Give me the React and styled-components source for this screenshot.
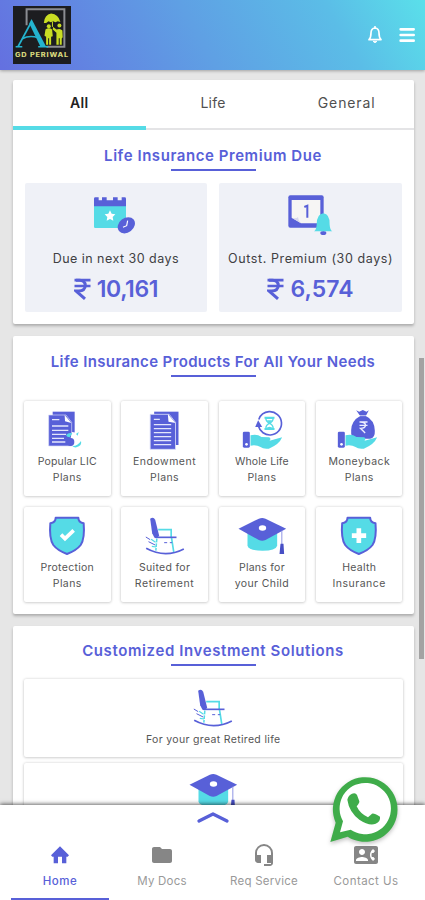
import React from "react";
import styled, { createGlobalStyle } from "styled-components";
import { MdFolder, MdHeadsetMic, MdContactPhone } from "react-icons/md";

const INDIGO = "#5860d8";
const CYAN = "#55dbe6";

const GlobalStyle = createGlobalStyle`
  * { box-sizing: border-box; }
  body {
    margin: 0;
    background: #e6e6e6;
    font-family: Inter, "Open Sans", sans-serif;
  }
`;

const Screen = styled.div`
  position: relative;
  display: flex;
  flex-direction: column;
  width: 425px;
  height: 900px;
  overflow: hidden;
  background: #e6e6e6;
`;

const Header = styled.header`
  flex: none;
  display: flex;
  align-items: center;
  height: 70px;
  padding: 0 10px 0 13px;
  background: linear-gradient(60deg, #6470e0 0%, #5fa0e4 47%, #5bbde7 78%, #5ae0ea 100%);
  box-shadow: 0 1px 3px rgba(0, 0, 0, 0.3);
  z-index: 1;
`;

const HeaderActions = styled.div`
  display: flex;
  align-items: center;
  gap: 16px;
  margin-left: auto;
`;

const Content = styled.main`
  flex: 1;
  min-height: 0;
  display: flex;
  flex-direction: column;
  gap: 12px;
  padding: 10px 11.5px 0 12.5px;
  overflow: hidden;
`;

const Card = styled.section`
  flex: none;
  height: ${(p) => p.$height}px;
  background: #fff;
  border-radius: 2px;
  box-shadow: 0 2px 3px rgba(0, 0, 0, 0.25);
`;

const Tabs = styled.nav`
  display: grid;
  grid-template-columns: repeat(3, 1fr);
  height: 50px;
  border-bottom: 2px solid #e4e4e6;
`;

const Tab = styled.div`
  height: 50px;
  padding-top: 12px;
  border-bottom: 4px solid ${(p) => (p.$active ? CYAN : "transparent")};
  color: ${(p) => (p.$active ? "#222" : "#505050")};
  font-size: 14px;
  font-weight: ${(p) => (p.$active ? 600 : 400)};
  letter-spacing: ${(p) => p.$track || 0}px;
  line-height: 21px;
  text-align: center;
`;

const Title = styled.h2`
  margin: 0;
  padding-top: ${(p) => p.$top}px;
  color: ${INDIGO};
  font-size: 15px;
  font-weight: 600;
  line-height: 21px;
  letter-spacing: ${(p) => p.$track || 0}px;
  text-align: center;
  white-space: nowrap;

  &::after {
    content: "";
    display: block;
    width: 85px;
    height: 2px;
    margin: 3px auto 0;
    background: ${INDIGO};
  }
`;

const DueRow = styled.div`
  display: grid;
  grid-template-columns: 1fr 1fr;
  gap: 12px;
  padding: 12px 11.5px 0 12px;
`;

const DueTile = styled.div`
  display: flex;
  flex-direction: column;
  align-items: center;
  height: 129px;
  padding-top: 10px;
  background: #eff1f7;
  border-radius: 2px;
`;

const DueLabel = styled.div`
  margin-top: 14px;
  color: #404043;
  font-size: 12.5px;
  line-height: 20px;
  letter-spacing: ${(p) => p.$track || 0}px;
  white-space: nowrap;
`;

const Amount = styled.div`
  display: flex;
  align-items: center;
  gap: 6px;
  margin-top: 5px;
  color: ${INDIGO};
  font-size: 23px;
  font-weight: 600;
  line-height: 30px;
  letter-spacing: ${(p) => p.$track || 0}px;
`;

const ProductGrid = styled.div`
  display: grid;
  grid-template-columns: repeat(4, 86.5px);
  justify-content: space-between;
  row-gap: 11px;
  padding: 24px 11px 0 11.5px;
`;

const Product = styled.div`
  display: flex;
  flex-direction: column;
  align-items: center;
  height: 95px;
  padding-top: 9px;
  background: #fff;
  border-radius: 2px;
  box-shadow: 0 0 3px rgba(0, 0, 0, 0.16), 0 1px 3px rgba(0, 0, 0, 0.12);
`;

const Caption = styled.div`
  margin-top: ${(p) => p.$gap || 0}px;
`;

const CaptionLine = styled.div`
  color: #555;
  font-size: 10.5px;
  line-height: 16px;
  letter-spacing: ${(p) => p.$track || 0}px;
  text-align: center;
  white-space: nowrap;
`;

const SolutionList = styled.div`
  display: flex;
  flex-direction: column;
  gap: 6px;
  padding: 13px 11px 0 11.5px;
`;

const Solution = styled(Product)`
  height: 78px;
`;

const ScrollThumb = styled.div`
  position: absolute;
  top: 358px;
  right: 1px;
  width: 5px;
  height: 301px;
  background: #a3a3a3;
`;

const BottomBar = styled.footer`
  flex: none;
  display: flex;
  flex-direction: column;
  align-items: center;
  height: 95px;
  padding: 6px 8px 0;
  background: #fff;
  box-shadow: 0 -1px 4px rgba(0, 0, 0, 0.6);
  z-index: 1;
`;

const NavRow = styled.nav`
  display: grid;
  grid-template-columns: repeat(4, 1fr);
  width: 100%;
  margin-top: auto;
  padding-left: 1px;
`;

const NavItem = styled.div`
  display: flex;
  flex-direction: column;
  align-items: center;
  height: 57px;
  margin: 0 2px;
  color: ${(p) => (p.$active ? INDIGO : "#868686")};
  border-bottom: 2px solid ${(p) => (p.$active ? INDIGO : "transparent")};
`;

const NavLabel = styled.span`
  margin-top: 5px;
  color: ${(p) => (p.$active ? INDIGO : "#999")};
  font-size: 11.5px;
  font-weight: ${(p) => (p.$active ? 500 : 400)};
  line-height: 18px;
  letter-spacing: ${(p) => p.$track || 0}px;
  white-space: nowrap;
`;

const ChatButton = styled.div`
  position: absolute;
  left: 327.5px;
  top: 774px;
  width: 70px;
  height: 70px;
  z-index: 2;
  filter: drop-shadow(0 2px 2px rgba(0, 0, 0, 0.25));
`;

const Drawing = styled.svg`
  display: block;
  flex: none;
`;

const Logo = () => (
  <Drawing width="58" height="58" viewBox="39 17 175 175">
    <rect x="39" y="17" width="175" height="175" fill="#1c1d20" />
    <path d="M80 75V27h114v113h-54" fill="none" stroke="#8b8d92" strokeWidth="6" />
    <path d="M54 140L94 66" fill="none" stroke="#24b4cf" strokeWidth="5" />
    <path d="M88 70l7-14 44 84h-17z" fill="#24b4cf" />
    <path d="M67 116q22-12 48-3" fill="none" stroke="#24b4cf" strokeWidth="5" />
    <path d="M47 140h20M115 140h30" stroke="#24b4cf" strokeWidth="4" />
    <path d="M132 68q2-24 22-28 22 2 28 25l-8-2-7 3-7-3-7 3-7-3-7 5z" fill="#c9dd23" />
    <path d="M158 64v16" stroke="#c9dd23" strokeWidth="3" />
    <circle cx="147" cy="78" r="6" fill="#c9dd23" />
    <path d="M137 88q10-8 20 0l2 20-5 2v24h-6v-20h-3v20h-6v-24l-5-3z" fill="#c9dd23" />
    <circle cx="179" cy="76" r="6" fill="#c9dd23" />
    <path d="M160 80l10 8q12-5 18 3l1 20-3 4v19h-6v-20h-3v20h-7V98l-11-10z" fill="#c9dd23" />
    <text x="45" y="170" textLength="163" lengthAdjust="spacingAndGlyphs" fill="#d6d77c" fontFamily="Inter, sans-serif" fontWeight="800" fontSize="18" letterSpacing="2">
      GD PERIWAL
    </text>
  </Drawing>
);

const BellIcon = () => (
  <Drawing width="16" height="18" viewBox="462 79 48 54" fill="none" stroke="#fff" strokeWidth="5" strokeLinejoin="round" strokeLinecap="round">
    <path d="M468 120q6-6 6-20 0-14 12-15 12 1 12 15 0 14 6 20z" />
    <path d="M486 81v4" />
    <path d="M481 126q5 6 10 0z" fill="#fff" strokeWidth="3" />
  </Drawing>
);

const MenuIcon = () => (
  <Drawing width="16" height="16" viewBox="557 83 48 48" fill="none" stroke="#fff" strokeWidth="8" strokeLinecap="round">
    <path d="M562 90h39M562 107h39M562 124h39" />
  </Drawing>
);

const CalendarClockIcon = () => (
  <Drawing width="46.67" height="42" viewBox="278 165 140 126">
    <path d="M281 203h96v67h-92q-4 0-4-4z" fill={CYAN} />
    <path d="M281 205v-23q0-4 4-4h10v9h10v-9h14v9h19v-9h14v9h12v-9h9q4 0 4 4v23z" fill={INDIGO} />
    <path d="M329 217l5 10 11 2-8 8 2 11-10-5-10 5 2-11-8-8 11-2z" fill="#fff" />
    <ellipse cx="378" cy="262" rx="28" ry="22" transform="rotate(-38 378 262)" fill={INDIGO} />
    <path d="M382 248l-3 15-11 5" fill="none" stroke="#fff" strokeWidth="3.5" />
  </Drawing>
);

const CalendarBellIcon = () => (
  <Drawing width="46.67" height="42" viewBox="222 161 140 126">
    <rect x="226" y="168" width="106" height="97" rx="6" fill={INDIGO} />
    <path d="M236 182h86v70h-58l-28-17z" fill="#f6f5f4" />
    <path d="M236 235q14 4 19-2 0 10 9 19z" fill="#d5d6ed" />
    <path d="M274 203l9-4v36" fill="none" stroke={INDIGO} strokeWidth="6" />
    <ellipse cx="331" cy="281" rx="9" ry="6" fill={INDIGO} />
    <path d="M303 276q7-4 8-20 0-32 20-34 20 2 19 34 1 16 8 20z" fill={CYAN} />
  </Drawing>
);

const RupeeIcon = () => (
  <Drawing width="17" height="22" viewBox="0 0 17 22" fill="none" stroke="currentColor" strokeWidth="3">
    <path d="M.5 2.2h16M.5 8h16" strokeWidth="2.7" />
    <path d="M2 2.2h3.5q5.8.3 5.8 5.3-.2 5.4-6.6 5.4H2l9 8" />
  </Drawing>
);

const Icon50 = ({ origin, children }) => (
  <Drawing width="50" height="40" viewBox={`${origin} 150 120`}>
    {children}
  </Drawing>
);

const PopularIcon = () => (
  <Icon50 origin="126 225">
    <path d="M158 230h66v82h-66z" fill={INDIGO} />
    <path d="M146 240h52l17 22v71h-69z" fill={INDIGO} stroke="#d9dcf8" strokeWidth="2" />
    <path d="M194 240l20 24-19-5z" fill="#fff" />
    <path d="M156 254h22M156 273h49M156 286h49M156 298h42M156 310h36M156 321h40" stroke="#e3e6fb" strokeWidth="4" />
    <path d="M216 291l14 2 4 22-16 8-8-6z" fill="#fff" />
    <path d="M198 300q9-9 19-5l-8 12q-8 0-11-7zM228 297l8-6-3 11z" fill={CYAN} />
    <ellipse cx="212" cy="321" rx="11" ry="12" fill={INDIGO} />
    <path d="M217 333q15 1 26-15 4 14-14 19-8 1-12-4z" fill={CYAN} />
  </Icon50>
);

const EndowmentIcon = () => (
  <Icon50 origin="418.5 225">
    <path d="M461 230h73v100h-73z" fill={INDIGO} />
    <path d="M449 238h57l19 24v81h-76z" fill={INDIGO} stroke="#d9dcf8" strokeWidth="2.5" />
    <path d="M502 237l23 27-21-4z" fill="#fff" />
    <path d="M460 253h18M460 269h52M460 281h52M460 293h52M460 305h52M460 317h52M460 329h52" stroke="#e3e6fb" strokeWidth="4" />
  </Icon50>
);

const Hand = ({ x }) => (
  <g transform={`translate(${x} 0)`}>
    <rect x="0" y="290" width="21" height="48" rx="4" fill={INDIGO} />
    <circle cx="11" cy="328" r="4" fill="#fff" />
    <path d="M23 301q19-6 33 5l23 1q7 4 1 10l38-10q-9 22-40 34-17 2-25-5-12-7-30-4z" fill={CYAN} />
  </g>
);

const WholeLifeIcon = () => (
  <Icon50 origin="70.5 225">
    <circle cx="169" cy="265" r="35" fill="none" stroke={INDIGO} strokeWidth="5" strokeDasharray="198 22" strokeDashoffset="-14" transform="rotate(176 169 265)" />
    <path d="M125 276l9-20 12 20z" fill={INDIGO} />
    <path d="M153 248h30M153 282h30" stroke={CYAN} strokeWidth="6" />
    <path d="M157 250q0 10 11 15-11 5-11 15h22q0-10-11-15 11-5 11-15z" fill="none" stroke={CYAN} strokeWidth="4" />
    <path d="M160 256h16l-8 9zM158 280q10-10 20 0z" fill={CYAN} />
    <Hand x="88" />
  </Icon50>
);

const MoneybackIcon = () => (
  <Icon50 origin="364.5 225">
    <path d="M431 226l9 4 11-5 11 5 7-4-9 17q26 12 27 44 1 22-14 24h-43q-16-2-14-26 1-28 27-42z" fill={INDIGO} />
    <path d="M436 242h28" stroke="#fff" strokeWidth="2" />
    <path d="M441 261h24M441 271h24M443 261q16 0 16 10-1 9-15 9l14 14" fill="none" stroke="#eef" strokeWidth="4" />
    <Hand x="376" />
  </Icon50>
);

const Shield = ({ origin, x, children }) => (
  <Icon50 origin={origin}>
    <g transform={`translate(${x} 0)`}>
      <path
        d="M-34 53h68q0 14 16 17 4 45-9 65-12 16-41 27-29-11-41-27-13-20-9-65 16-3 16-17z"
        fill={CYAN}
        stroke={INDIGO}
        strokeWidth="6"
        strokeLinejoin="round"
      />
      {children}
    </g>
  </Icon50>
);

const ProtectionIcon = () => (
  <Shield origin="126 48" x="201">
    <path d="M-18 104l12 12 26-25" fill="none" stroke="#fff" strokeWidth="11" />
  </Shield>
);

const HealthIcon = () => (
  <Shield origin="364.5 48" x="439">
    <path d="M0 85v44M-21 107h43" fill="none" stroke="#fff" strokeWidth="14" />
  </Shield>
);

const ChairIcon = () => (
  <Icon50 origin="418.5 48">
    <path d="M449 56q10-6 15 3l12 48q-6 10-14 6l-7-13z" fill={INDIGO} />
    <path d="M473 89h39v22M513 113l7 45" fill="none" stroke={CYAN} strokeWidth="5" />
    <path d="M469 116l-3 36" stroke={CYAN} strokeWidth="4.5" strokeDasharray="11 3" />
    <path d="M465 112h63" stroke={INDIGO} strokeWidth="5" />
    <path d="M437 145q57 31 113 2" fill="none" stroke={INDIGO} strokeWidth="5" />
    <path d="M436 111l13 8M444 125l20 10M491 128h9M508 128h7" stroke={INDIGO} strokeWidth="3" />
    <path d="M452 118l13 9M454 139l13 2" stroke={CYAN} strokeWidth="3.5" />
  </Icon50>
);

const GraduationIcon = () => (
  <Icon50 origin="70.5 48">
    <path d="M102 98h89v39q-4 15-44 15t-45-15z" fill={CYAN} />
    <path d="M75 86l61-30q10-4 20 0l62 30-62 34q-10 5-20 0z" fill={INDIGO} />
    <ellipse cx="147" cy="84" rx="11" ry="8" fill="#fff" />
    <path d="M205 92v42" stroke="#8f95e4" strokeWidth="3" />
    <path d="M201 131h9l2 31h-14z" fill="#474fc5" />
  </Icon50>
);

const HomeIcon = () => (
  <Drawing width="18" height="24" viewBox="153 250 54 72" fill="currentColor">
    <path d="M180 260l27 27-4 4h-4v20h-13v-20h-12v20h-13v-20h-4l-4-4z" />
  </Drawing>
);

const ChevronUpIcon = () => (
  <Drawing width="34" height="13" viewBox="288 424 102 39">
    <path d="M297 454l42-21 42 21" fill="none" stroke={INDIGO} strokeWidth="10" strokeLinecap="round" strokeLinejoin="round" />
  </Drawing>
);

const ChatIcon = () => (
  <Drawing width="70" height="70" viewBox="345 42 210 210">
    <path d="M352 246l16-58A97 97 0 1 1 404 230z" fill="#3fac4a" />
    <path d="M381 217l9-33A77 77 0 1 1 413 209z" fill="#fff" />
    <path d="M403 119q3-14 14-18 12-3 15 4l7 19q1 5-8 15 10 22 34 33l12-11q5-3 24 9 2 15-13 21-19 8-49-12-31-24-36-60z" fill="#3fac4a" />
  </Drawing>
);

const products = [
  { icon: <PopularIcon />, lines: [["Popular LIC", 0.15], ["Plans", 0.4]] },
  { icon: <EndowmentIcon />, lines: [["Endowment", 0.5], ["Plans", 0.4]] },
  { icon: <WholeLifeIcon />, lines: [["Whole Life", 0.1], ["Plans", 0.4]] },
  { icon: <MoneybackIcon />, lines: [["Moneyback", 0.4], ["Plans", 0.4]] },
  { icon: <ProtectionIcon />, lines: [["Protection", 0.3], ["Plans", 0.4]] },
  { icon: <ChairIcon />, lines: [["Suited for", 0.3], ["Retirement", 0.6]] },
  { icon: <GraduationIcon />, lines: [["Plans for", 0.25], ["your Child", 0.4]] },
  { icon: <HealthIcon />, lines: [["Health", 0.3], ["Insurance", 0.5]] },
];

const navItems = [
  { label: "Home", icon: <HomeIcon />, active: true, track: 0.5 },
  { label: "My Docs", icon: <MdFolder size={24} />, track: 0.2 },
  { label: "Req Service", icon: <MdHeadsetMic size={24} />, track: 0.25 },
  { label: "Contact Us", icon: <MdContactPhone size={24} />, track: 0.45 },
];

export default function App() {
  return (
    <>
      <GlobalStyle />
      <Screen>
        <Header>
          <Logo />
          <HeaderActions>
            <BellIcon />
            <MenuIcon />
          </HeaderActions>
        </Header>

        <Content>
          <Card $height={244}>
            <Tabs>
              <Tab $active $track={0.4}>All</Tab>
              <Tab $track={0.2}>Life</Tab>
              <Tab $track={0.9}>General</Tab>
            </Tabs>
            <Title $top={15} $track={0.56}>Life Insurance Premium Due</Title>
            <DueRow>
              <DueTile>
                <CalendarClockIcon />
                <DueLabel $track={0.47}>Due in next 30 days</DueLabel>
                <Amount $track={-0.4}>
                  <RupeeIcon />
                  10,161
                </Amount>
              </DueTile>
              <DueTile>
                <CalendarBellIcon />
                <DueLabel $track={0.6}>Outst. Premium (30 days)</DueLabel>
                <Amount $track={0.1}>
                  <RupeeIcon />
                  6,574
                </Amount>
              </DueTile>
            </DueRow>
          </Card>

          <Card $height={278}>
            <Title $top={15} $track={0.37}>Life Insurance Products For All Your Needs</Title>
            <ProductGrid>
              {products.map(({ icon, lines }) => (
                <Product key={lines[0][0]}>
                  {icon}
                  <Caption $gap={3.5}>
                    {lines.map(([text, track]) => (
                      <CaptionLine key={text} $track={track}>{text}</CaptionLine>
                    ))}
                  </Caption>
                </Product>
              ))}
            </ProductGrid>
          </Card>

          <Card $height={300}>
            <Title $top={14} $track={0.61}>Customized Investment Solutions</Title>
            <SolutionList>
              <Solution>
                <ChairIcon />
                <Caption $gap={4}>
                  <CaptionLine $track={0.33}>For your great Retired life</CaptionLine>
                </Caption>
              </Solution>
              <Solution>
                <GraduationIcon />
              </Solution>
            </SolutionList>
          </Card>
        </Content>

        <BottomBar>
          <ChevronUpIcon />
          <NavRow>
            {navItems.map(({ label, icon, active, track }) => (
              <NavItem key={label} $active={active}>
                {icon}
                <NavLabel $active={active} $track={track}>{label}</NavLabel>
              </NavItem>
            ))}
          </NavRow>
        </BottomBar>

        <ScrollThumb />
        <ChatButton>
          <ChatIcon />
        </ChatButton>
      </Screen>
    </>
  );
}
